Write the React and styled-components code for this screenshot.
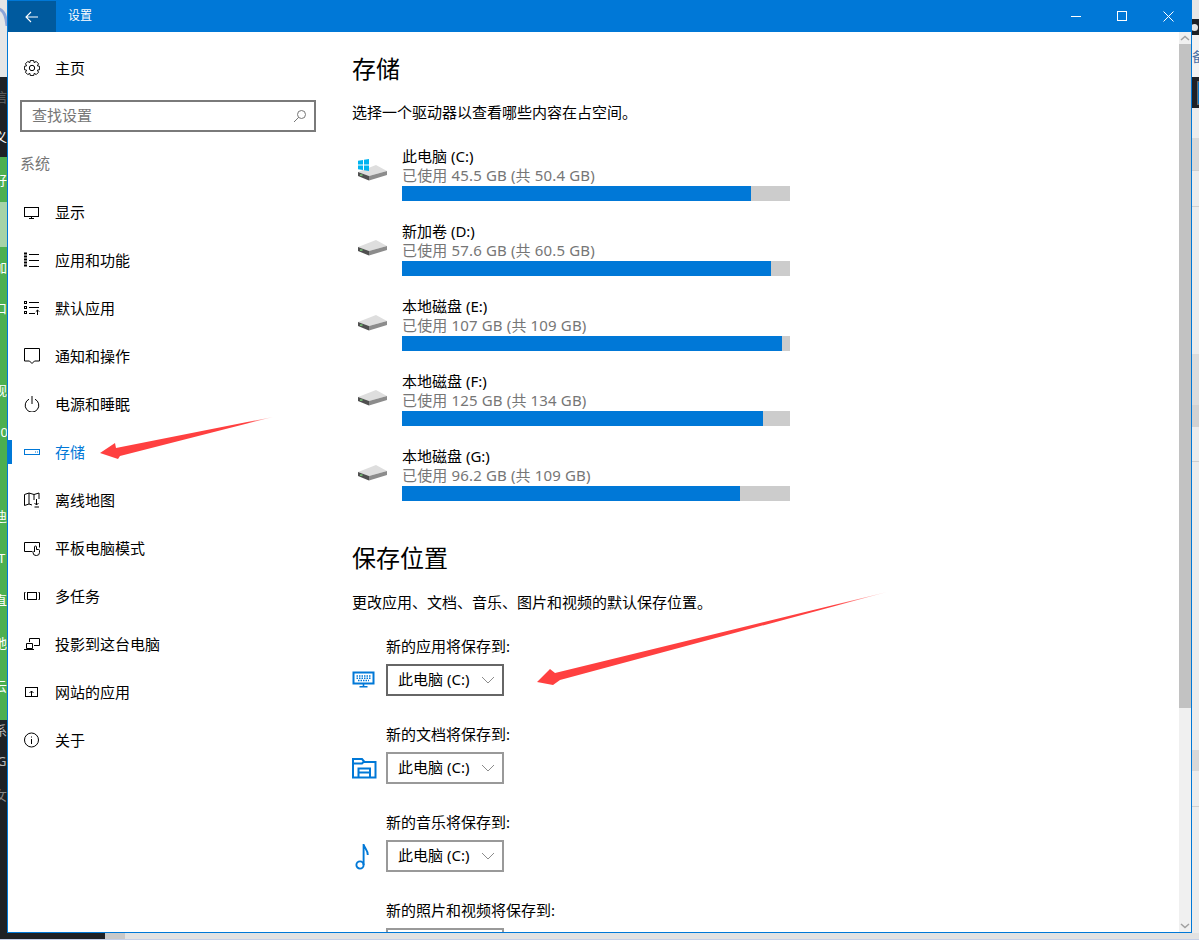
import React from 'react';
import styled, { createGlobalStyle } from 'styled-components';

const GlobalStyle = createGlobalStyle`
  html, body { margin: 0; padding: 0; background: #e8e8e8; overflow: hidden; }
  body { font-family: "Noto Sans", "Noto Sans CJK SC", sans-serif; }
`;

const BLUE = '#0078d7';

const Desktop = styled.div`
  position: relative;
  width: 1199px;
  height: 940px;
  overflow: hidden;
  display: grid;
  grid-template-columns: 7px 1185px 7px;
  grid-template-rows: 933px 7px;
`;

const Strip = styled.div`
  display: flex;
  flex-direction: column;
  overflow: hidden;
  background: ${(p) => p.$bg};
  ${(p) => p.$shadow && 'box-shadow: inset 3px 0 3px -2px rgba(0, 0, 0, 0.25);'}
`;

const StripRow = styled.div`
  flex: 0 0 ${(p) => p.$h}px;
  display: flex;
  align-items: center;
  overflow: hidden;
  background: ${(p) => p.$bg};
  color: ${(p) => p.$color || '#fff'};
  font-size: 13px;
  line-height: 16px;
  white-space: nowrap;
  text-indent: ${(p) => p.$indent ?? -6}px;
  border-bottom: ${(p) => (p.$line ? '1px solid #cfcfcf' : 'none')};
  box-sizing: border-box;
`;

const StatusDot = styled.div`
  flex: none;
  width: 7px;
  height: 7px;
  margin-left: -1px;
  border-radius: 50%;
  background: #e4e4e4;
`;

const TaskTile = styled.div`
  flex: none;
  width: 4px;
  height: 22px;
  margin-left: 5px;
  border: 1px solid #6a6a6a;
  border-right: 0;
  background: #0a78c8;
`;

const BottomStrip = styled.div`
  grid-column: 1 / 4;
  display: flex;
  background: #e2e2e2;
  border-bottom: 1px solid #c6cfe6;
  box-sizing: border-box;
`;

const BottomDark = styled.div`
  width: 105px;
  background: #1e2126;
`;

const BottomThumb = styled.div`
  width: 20px;
  background: #c8c8c8;
`;

const Window = styled.div`
  display: flex;
  flex-direction: column;
  border: 1px solid ${BLUE};
  border-top: 0;
  background: #fff;
  overflow: hidden;
  min-height: 0;
`;

const TitleBar = styled.div`
  flex: 0 0 32px;
  display: flex;
  align-items: center;
  background: ${BLUE};
  color: #fff;
`;

const BackButton = styled.div`
  width: 48px;
  height: 31px;
  margin-top: 1px;
  display: flex;
  align-items: center;
  justify-content: center;
  background: #005a9e;
`;

const Title = styled.div`
  margin-left: 12px;
  flex: 1;
  font-size: 12px;
  line-height: 16px;
  padding-bottom: 1px;
`;

const CaptionButton = styled.div`
  width: 46px;
  height: 32px;
  display: flex;
  align-items: center;
  justify-content: center;
`;

const Body = styled.div`
  flex: 1;
  display: flex;
  min-height: 0;
  overflow: hidden;
`;

const Sidebar = styled.nav`
  flex: 0 0 320px;
  padding-top: 12px;
  box-sizing: border-box;
`;

const NavItem = styled.div`
  position: relative;
  height: 48px;
  display: flex;
  align-items: center;
  gap: 15px;
  padding-left: 16px;
  font-size: 15px;
  color: ${(p) => (p.$active ? BLUE : '#000')};
  ${(p) =>
    p.$active &&
    `&::before {
      content: '';
      position: absolute;
      left: 0;
      top: 12px;
      width: 4px;
      height: 24px;
      background: ${BLUE};
    }`}
`;

const NavLabel = styled.span`
  margin-top: -2px;
`;

const NavGlyph = styled.svg`
  width: 16px;
  height: 16px;
  flex: none;
  fill: none;
  stroke: currentColor;
  stroke-width: 1;
`;

const SearchBox = styled.div`
  margin: 8px 0 0 12px;
  width: 296px;
  height: 32px;
  box-sizing: border-box;
  border: 2px solid #7a7a7a;
  display: flex;
  align-items: center;
  justify-content: space-between;
  padding: 0 7px 0 10px;
  font-size: 15px;
  color: #767676;
`;

const SearchText = styled.span`
  margin-top: -3px;
`;

const SectionLabel = styled.div`
  margin: 16px 0 8px 12px;
  height: 32px;
  line-height: 30px;
  font-size: 15px;
  color: #767676;
`;

const Content = styled.main`
  flex: 1;
  min-width: 0;
  padding: 16px 0 0 24px;
  overflow: hidden;
`;

const Heading = styled.h2`
  margin: ${(p) => p.$top || 0}px 0 0;
  font-size: 24px;
  font-weight: 400;
  line-height: 42px;
  color: #000;
`;

const Description = styled.p`
  margin: ${(p) => p.$top}px 0 0;
  height: 22px;
  font-size: 15px;
  line-height: 20px;
  color: #000;
`;

const DriveList = styled.div`
  margin-top: 23px;
  display: flex;
  flex-direction: column;
  gap: 21px;
`;

const DriveRow = styled.div`
  display: flex;
`;

const DriveIconBox = styled.div`
  flex: 0 0 50px;
  padding: 12px 0 0 5px;
  box-sizing: border-box;
`;

const DriveInfo = styled.div`
  width: 388px;
`;

const DriveName = styled.div`
  height: 20px;
  line-height: 18px;
  font-size: 15px;
  color: #000;
`;

const DriveUsage = styled.div`
  height: 19px;
  line-height: 17px;
  font-size: 15px;
  letter-spacing: 0.15px;
  color: #767676;
`;

const UsageBar = styled.div`
  height: 15px;
  background: #ccc;
`;

const UsageFill = styled.div`
  height: 100%;
  background: ${BLUE};
`;

const SaveList = styled.div`
  margin-top: 23px;
  display: flex;
  flex-direction: column;
  gap: 29px;
`;

const SaveRow = styled.div`
  display: grid;
  grid-template-columns: 34px 118px;
  grid-template-rows: 20px 32px;
  row-gap: 7px;
`;

const SaveLabel = styled.div`
  grid-column: 2;
  white-space: nowrap;
  font-size: 15px;
  line-height: 18px;
  color: #000;
`;

const SaveIcon = styled.div`
  grid-column: 1;
  display: flex;
  align-items: center;
  color: ${BLUE};
`;

const Select = styled.div`
  grid-column: 2;
  box-sizing: border-box;
  height: 32px;
  border: 2px solid ${(p) => (p.$focus ? '#666' : '#999')};
  display: flex;
  align-items: center;
  justify-content: space-between;
  padding: 0 7px 0 10px;
  font-size: 15px;
  color: #000;
`;

const SelectText = styled.span`
  margin-top: -3px;
`;

const Scrollbar = styled.div`
  flex: 0 0 12px;
  display: flex;
  flex-direction: column;
  background: #f0f0f0;
`;

const ScrollArrow = styled.div`
  flex: 0 0 12px;
  display: flex;
  align-items: center;
  justify-content: center;
`;

const ScrollThumb = styled.div`
  flex: 0 0 664px;
  background: #c2c2c2;
`;

const ScrollTrack = styled.div`
  flex: 1;
`;

const Annotation = styled.svg`
  position: absolute;
  left: 0;
  top: 0;
  width: 1199px;
  height: 940px;
  pointer-events: none;
`;

const navIcons = {
  display: (
    <>
      <rect x="0.5" y="3.5" width="14" height="9" />
      <path d="M7.5 12.5V14.5M5 14.5H10" />
    </>
  ),
  apps: (
    <>
      <path d="M0 1.5H3M0 4.5H3M0 7.5H3M0 10.5H3M0 13.5H3" strokeWidth="2" />
      <path d="M5 2.5H15M5 8.5H15M5 14.5H15" />
    </>
  ),
  defaults: (
    <>
      <rect x="0.5" y="1.5" width="2" height="2" />
      <rect x="0.5" y="6.5" width="2" height="2" />
      <rect x="0.5" y="11.5" width="2" height="2" />
      <path d="M5 2.5H15M5 7.5H15M5 13.5H11M13.5 15V10M11.8 11.7L13.5 10L15.2 11.7" />
    </>
  ),
  notify: <path d="M0.5 0.5H15.5V13H10.5L8 15.5L5.5 13H0.5Z" />,
  power: <path d="M5 3.2A6.8 6.8 0 1 0 11 3.2M8 0V8" />,
  storage: (
    <>
      <rect x="0.5" y="5.5" width="15" height="5" />
      <path d="M11 8H12M13 8H14" />
    </>
  ),
  map: (
    <path d="M0.5 2.5L5 1L10 2.5L15 1V7M0.5 2.5V13.5L5 12L8 13M5 1V12M10 2.5V8M12.5 7V13M10.5 11L12.5 13L14.5 11M10.5 15H15" />
  ),
  tablet: (
    <path d="M8.5 11.5H0.5V2.5H15.5V7.5M10.5 12V7A1 1 0 0 1 12.5 7V9.5H14.5A1 1 0 0 1 15.5 10.5V12.5A3 3 0 0 1 12.5 15.5H12A3 3 0 0 1 9 12.5L10.5 11" />
  ),
  multitask: (
    <>
      <rect x="3.5" y="4.5" width="9" height="7" />
      <path d="M1.5 4.5H0.5V11.5H1.5M14.5 4.5H15.5V11.5H14.5" />
    </>
  ),
  project: (
    <path d="M5.5 6V2.5H15.5V9.5H10M2.5 7.5H8.5V12.5H2.5ZM0 13.5H10" />
  ),
  web: (
    <>
      <rect x="1.5" y="3.5" width="12" height="9" />
      <path d="M7.5 12V7M5.5 9L7.5 7L9.5 9" />
    </>
  ),
  about: (
    <>
      <circle cx="7.5" cy="8" r="7" />
      <path d="M7.5 7V12M7.5 4.5V5.5" />
    </>
  ),
};

const navItems = [
  ['display', '显示'],
  ['apps', '应用和功能'],
  ['defaults', '默认应用'],
  ['notify', '通知和操作'],
  ['power', '电源和睡眠'],
  ['storage', '存储'],
  ['map', '离线地图'],
  ['tablet', '平板电脑模式'],
  ['multitask', '多任务'],
  ['project', '投影到这台电脑'],
  ['web', '网站的应用'],
  ['about', '关于'],
];

const drives = [
  { name: '此电脑 (C:)', usage: '已使用 45.5 GB (共 50.4 GB)', fill: 349, win: true },
  { name: '新加卷 (D:)', usage: '已使用 57.6 GB (共 60.5 GB)', fill: 369 },
  { name: '本地磁盘 (E:)', usage: '已使用 107 GB (共 109 GB)', fill: 380 },
  { name: '本地磁盘 (F:)', usage: '已使用 125 GB (共 134 GB)', fill: 361 },
  { name: '本地磁盘 (G:)', usage: '已使用 96.2 GB (共 109 GB)', fill: 338 },
];

const leftRows = [
  { h: 77, bg: '#e6e6e6', arc: true },
  { h: 40, bg: '#1e2126', text: '信', color: '#666' },
  { h: 40, bg: '#1e2126', text: '义' },
  { h: 45, bg: '#4caf50', text: '好' },
  { h: 45, bg: '#a6d3a8' },
  { h: 40, bg: '#4caf50', text: '加' },
  { h: 42, bg: '#4caf50', text: '口' },
  { h: 40, bg: '#4caf50' },
  { h: 42, bg: '#4caf50', text: '视' },
  { h: 42, bg: '#4caf50', text: '10', indent: -7 },
  { h: 42, bg: '#4caf50' },
  { h: 41, bg: '#4caf50', text: '迪' },
  { h: 43, bg: '#4caf50', text: 'T', indent: -2 },
  { h: 42, bg: '#4caf50', text: '直' },
  { h: 44, bg: '#4caf50', text: '地' },
  { h: 42, bg: '#4caf50', text: '云' },
  { h: 13, bg: '#4caf50' },
  { h: 20, bg: '#1e2126', text: '系', color: '#bbb' },
  { h: 42, bg: '#1e2126', text: 'G', color: '#bbb', indent: -3 },
  { h: 26, bg: '#1e2126', text: '女', color: '#888' },
  { h: 115, bg: '#1e2126' },
];

const rightRows = [
  { h: 19, bg: '#e6e6e6' },
  { h: 16, bg: '#1e2126', dot: true },
  { h: 42, bg: '#f2f2f2', text: '备', color: '#4a6fa5', indent: 0 },
  { h: 31, bg: '#1e2126', tile: true },
  { h: 30, bg: '#ececec' },
  { h: 33, bg: '#d8d8d8', line: true },
  { h: 36, bg: '#ececec', line: true },
  { h: 147, bg: '#ececec' },
  { h: 51, bg: '#dcdcdc' },
  { h: 22, bg: '#d2d2d2' },
  { h: 35, bg: '#ececec', line: true },
  { h: 288, bg: '#ececec' },
  { h: 21, bg: '#d8d8d8' },
  { h: 36, bg: '#ececec', line: true },
  { h: 126, bg: '#ececec' },
];

const saveTargets = [
  { label: '新的应用将保存到:', icon: 'keyboard', focus: true },
  { label: '新的文档将保存到:', icon: 'folder' },
  { label: '新的音乐将保存到:', icon: 'music' },
  { label: '新的照片和视频将保存到:' },
];

function gearPath(cx, cy, outer, inner, teeth) {
  // teeth go round as four points each: base, tip, tip, base
  const step = (Math.PI * 2) / teeth;
  const pts = [];
  for (let i = 0; i < teeth; i++) {
    const a = i * step;
    [[-0.5, inner], [-0.27, outer], [0.27, outer], [0.5, inner]].forEach(([f, r]) => {
      pts.push(`${(cx + Math.cos(a + f * step) * r).toFixed(2)} ${(cy + Math.sin(a + f * step) * r).toFixed(2)}`);
    });
  }
  return `M${pts.join('L')}Z`;
}

function DriveIcon({ win }) {
  return (
    <svg width="31" height="23" viewBox="0 0 31 23">
      <polygon points="1,13 19,6 30,12 12,17" fill="#dedede" />
      <polygon points="1,13 12,17 12,21.5 1,17" fill="#505050" />
      <polygon points="12,17 30,12 30,16 12,21.5" fill="#8c8c8c" />
      <rect x="3" y="15.5" width="2.5" height="1.2" fill="#7fe07f" />
      {win && (
        <g fill="#00b4f0">
          <polygon points="1,1.8 6,1 6,5.5 1,5.5" />
          <polygon points="7,0.8 12,0 12,5.5 7,5.5" />
          <polygon points="1,6.5 6,6.5 6,11 1,10.2" />
          <polygon points="7,6.5 12,6.5 12,12 7,11.2" />
        </g>
      )}
    </svg>
  );
}

function SaveGlyph({ kind }) {
  if (kind === 'keyboard') {
    return (
      <svg width="24" height="18" viewBox="0 0 24 18" fill="none" stroke="currentColor">
        <rect x="1.5" y="1.5" width="20" height="11" strokeWidth="2" />
        <path d="M4.5 5H19M4.5 7.2H19M6 9.5H17" strokeWidth="1.5" strokeDasharray="1.5 1" />
        <path d="M11.5 13V15.5M7.5 15.8H15.5" strokeWidth="1.6" />
      </svg>
    );
  }
  if (kind === 'folder') {
    return (
      <svg width="25" height="22" viewBox="0 0 25 22" fill="none" stroke="currentColor" strokeWidth="2">
        <path d="M1 20.5V2H10L12.5 5H23.5V20.5H1Z" />
        <path d="M1 6.5H10L12 4.5" />
        <path d="M6.5 20.5V11.5H18V20.5M6.5 15.5H18" />
      </svg>
    );
  }
  if (kind === 'music') {
    return (
      <svg width="18" height="28" viewBox="0 0 18 28" fill="none" stroke="currentColor" strokeWidth="1.9">
        <circle cx="8" cy="23" r="3.6" />
        <path d="M11.6 23V2C12 6 16 8 15.8 13" />
      </svg>
    );
  }
  return null;
}

function Chevron() {
  return (
    <svg width="14" height="8" viewBox="0 0 14 8" fill="none" stroke="#8c8c8c">
      <path d="M1 1L7 7L13 1" />
    </svg>
  );
}

function Arrow({ id, tip, headA, notchA, tail, notchB, headB }) {
  const pts = [tip, headA, notchA, tail, notchB, headB].map((p) => p.join(',')).join(' ');
  return (
    <>
      <linearGradient id={id} gradientUnits="userSpaceOnUse" x1={tip[0]} y1={tip[1]} x2={tail[0]} y2={tail[1]}>
        <stop offset="0" stopColor="#ff4040" />
        <stop offset="0.85" stopColor="#ff4040" />
        <stop offset="1" stopColor="#ff4a4a" stopOpacity="0.2" />
      </linearGradient>
      <polygon points={pts} fill={`url(#${id})`} />
    </>
  );
}

export default function App() {
  return (
    <>
      <GlobalStyle />
      <Desktop>
        <Strip $bg="#1e2126">
          {leftRows.map((r, i) => (
            <StripRow key={i} $h={r.h} $bg={r.bg} $color={r.color} $indent={r.indent}>
              {r.arc && (
                <svg width="7" height="32" viewBox="0 0 7 32" style={{ alignSelf: 'flex-start' }} fill="none" stroke="#8fa6d8" strokeWidth="3">
                  <path d="M-1 9C3 10 6 14 7 26" />
                </svg>
              )}
              {r.text}
            </StripRow>
          ))}
        </Strip>

        <Window>
          <TitleBar>
            <BackButton>
              <svg width="14" height="12" viewBox="0 0 14 12" fill="none" stroke="#fff" strokeWidth="1.1">
                <path d="M13 6H1M6 1L1 6L6 11" />
              </svg>
            </BackButton>
            <Title>设置</Title>
            <CaptionButton>
              <svg width="10" height="10" viewBox="0 0 10 10" stroke="#fff"><path d="M0 5.5H10" /></svg>
            </CaptionButton>
            <CaptionButton>
              <svg width="10" height="10" viewBox="0 0 10 10" fill="none" stroke="#fff"><rect x="0.5" y="0.5" width="9" height="9" /></svg>
            </CaptionButton>
            <CaptionButton>
              <svg width="11" height="11" viewBox="0 0 11 11" stroke="#fff"><path d="M0.5 0.5L10.5 10.5M10.5 0.5L0.5 10.5" /></svg>
            </CaptionButton>
          </TitleBar>

          <Body>
            <Sidebar>
              <NavItem>
                <NavGlyph viewBox="0 0 16 16">
                  <path d={gearPath(8, 8, 7.8, 5.8, 8)} />
                  <circle cx="8" cy="8" r="2.7" />
                </NavGlyph>
                <NavLabel>主页</NavLabel>
              </NavItem>
              <SearchBox>
                <SearchText>查找设置</SearchText>
                <svg width="14" height="14" viewBox="0 0 14 14" fill="none" stroke="#767676">
                  <circle cx="8.5" cy="5.5" r="4" />
                  <path d="M5.7 8.3L1 13" />
                </svg>
              </SearchBox>
              <SectionLabel>系统</SectionLabel>
              {navItems.map(([key, label]) => (
                <NavItem key={key} $active={key === 'storage'}>
                  <NavGlyph viewBox="0 0 16 16">{navIcons[key]}</NavGlyph>
                  <NavLabel>{label}</NavLabel>
                </NavItem>
              ))}
            </Sidebar>

            <Content>
              <Heading>存储</Heading>
              <Description $top={12}>选择一个驱动器以查看哪些内容在占空间。</Description>
              <DriveList>
                {drives.map((d) => (
                  <DriveRow key={d.name}>
                    <DriveIconBox>
                      <DriveIcon win={d.win} />
                    </DriveIconBox>
                    <DriveInfo>
                      <DriveName>{d.name}</DriveName>
                      <DriveUsage>{d.usage}</DriveUsage>
                      <UsageBar>
                        <UsageFill style={{ width: d.fill }} />
                      </UsageBar>
                    </DriveInfo>
                  </DriveRow>
                ))}
              </DriveList>

              <Heading $top={36}>保存位置</Heading>
              <Description $top={13}>更改应用、文档、音乐、图片和视频的默认保存位置。</Description>
              <SaveList>
                {saveTargets.map((t) => (
                  <SaveRow key={t.label}>
                    <SaveLabel>{t.label}</SaveLabel>
                    <SaveIcon>
                      <SaveGlyph kind={t.icon} />
                    </SaveIcon>
                    <Select $focus={t.focus}>
                      <SelectText>此电脑 (C:)</SelectText>
                      <Chevron />
                    </Select>
                  </SaveRow>
                ))}
              </SaveList>
            </Content>

            <Scrollbar>
              <ScrollArrow>
                <svg width="10" height="6" viewBox="0 0 10 6" fill="none" stroke="#a0a0a0" strokeWidth="1.5"><path d="M1 5L5 1.5L9 5" /></svg>
              </ScrollArrow>
              <ScrollThumb />
              <ScrollTrack />
              <ScrollArrow>
                <svg width="10" height="6" viewBox="0 0 10 6" fill="none" stroke="#a0a0a0" strokeWidth="1.5"><path d="M1 1L5 4.5L9 1" /></svg>
              </ScrollArrow>
            </Scrollbar>
          </Body>
        </Window>

        <Strip $bg="#ececec" $shadow>
          {rightRows.map((r, i) => (
            <StripRow key={i} $h={r.h} $bg={r.bg} $color={r.color} $indent={r.indent} $line={r.line}>
              {r.dot && <StatusDot />}
              {r.tile && <TaskTile />}
              {r.text}
            </StripRow>
          ))}
        </Strip>

        <BottomStrip>
          <BottomDark />
          <BottomThumb />
        </BottomStrip>

        <Annotation viewBox="0 0 1199 940">
          <Arrow id="arrow-nav" tip={[100, 453]} headA={[115, 443]} notchA={[116, 448]} tail={[273, 417]} notchB={[120, 456]} headB={[118, 459]} />
          <Arrow id="arrow-save" tip={[537, 682]} headA={[550, 669]} notchA={[555, 673]} tail={[887, 592]} notchB={[560, 680]} headB={[553, 685]} />
        </Annotation>
      </Desktop>
    </>
  );
}
